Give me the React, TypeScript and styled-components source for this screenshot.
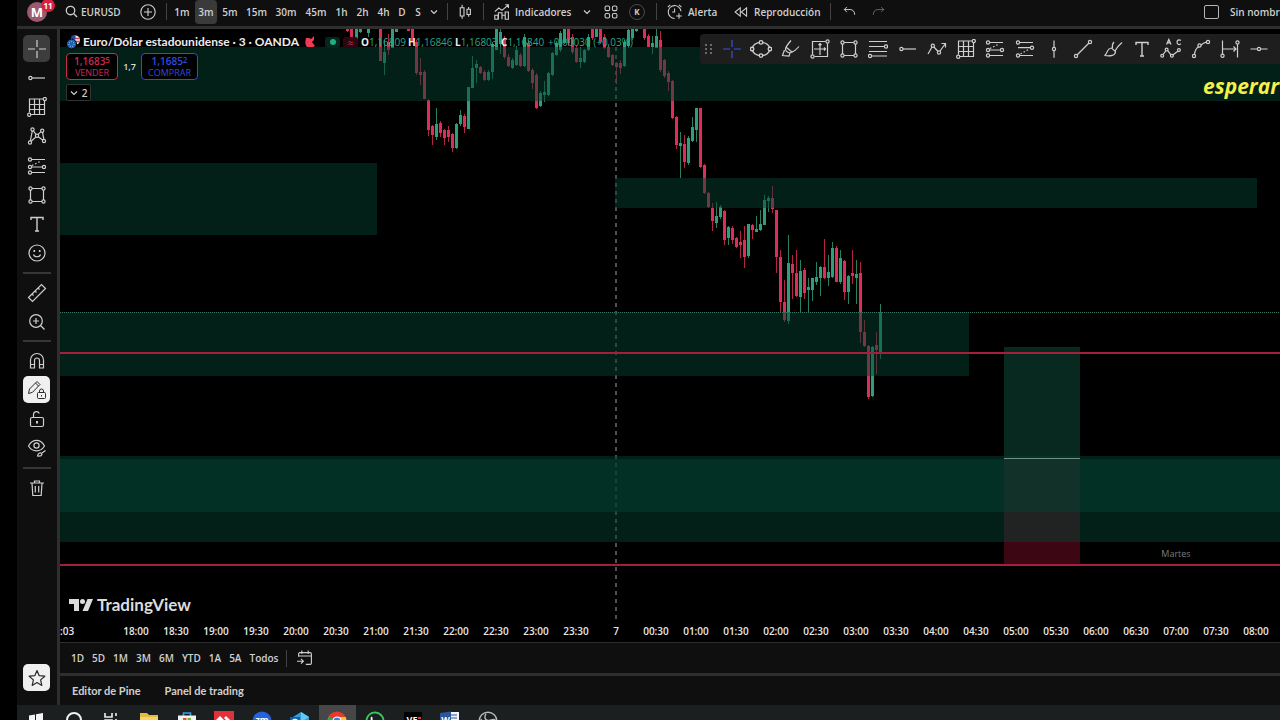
import React from "react";
import styled, { createGlobalStyle, css } from "styled-components";

const GlobalStyle = createGlobalStyle`
  * { box-sizing: border-box; }
  html, body { margin: 0; padding: 0; background: #000; }
  body { overflow: hidden; font-family: "Open Sans", "Noto Sans", sans-serif; color: #cfcfcf; }
  button, input { font: inherit; color: inherit; }
  svg { display: block; flex: none; }
`;

const LINE = "#2e2e2e";
const PANEL = "#0f0f0f";
const RED = "#dc2f58";
const GREEN = "#2f9e7c";

/* ---------- layout ---------- */

const Page = styled.div`
  display: flex;
  flex-direction: column;
  height: 100vh;
  padding-left: 17px;
  overflow: hidden;
`;

const Header = styled.header`
  display: flex;
  align-items: center;
  flex: none;
  height: 29px;
  padding: 0 0 3px 10px;
  background: ${PANEL};
  border-bottom: 3px solid ${LINE};
  font-size: 10px;
  font-weight: 600;
  white-space: nowrap;
`;

const Workspace = styled.div`
  display: flex;
  flex: 1;
  min-height: 0;
`;

const SideBar = styled.nav`
  display: flex;
  flex-direction: column;
  align-items: center;
  flex: none;
  width: 43px;
  padding: 6px 1px 14px 0;
  background: ${PANEL};
  border-right: 3px solid ${LINE};
`;

const Main = styled.main`
  display: flex;
  flex-direction: column;
  flex: 1;
  min-width: 0;
`;

const ChartArea = styled.section`
  position: relative;
  flex: 1;
  min-height: 0;
  overflow: hidden;
  background: #000;
`;

/* ---------- shared controls ---------- */

const PlainButton = styled.button`
  display: flex;
  align-items: center;
  justify-content: center;
  flex: none;
  padding: 0;
  border: 0;
  background: none;
  cursor: pointer;
`;

const Separator = styled.span<{ $before: number; $after: number }>`
  flex: none;
  width: 1px;
  height: 17px;
  margin: 0 ${(p) => p.$after}px 0 ${(p) => p.$before}px;
  background: #434343;
`;

/* ---------- header ---------- */

const Avatar = styled(PlainButton)`
  position: relative;
  width: 20px;
  height: 20px;
  border-radius: 50%;
  background: #9c5a70;
  color: #fff;
  font-size: 13px;
  font-weight: 700;
`;

const Badge = styled.span`
  position: absolute;
  top: -3px;
  left: 14px;
  width: 14px;
  height: 13px;
  border-radius: 7px;
  background: #d9213f;
  font-size: 8px;
  line-height: 13px;
  text-align: center;
`;

const HeaderButton = styled(PlainButton)<{ $gap?: number; $left?: number; $width?: number }>`
  gap: ${(p) => p.$gap ?? 0}px;
  margin-left: ${(p) => p.$left ?? 0}px;
  ${(p) => p.$width && css`width: ${p.$width}px; justify-content: flex-start;`}
`;

const Intervals = styled.div`
  display: flex;
  gap: 2px;
  flex: none;
`;

const Interval = styled(PlainButton)<{ $active?: boolean; $width: number }>`
  width: ${(p) => p.$width}px;
  height: 24px;
  border-radius: 4px;
  background: ${(p) => (p.$active ? "#3a3a3a" : "transparent")};
`;

const Round = styled(PlainButton)`
  width: 16px;
  height: 16px;
  margin-left: 11px;
  border: 1px solid #4a4a4a;
  border-radius: 50%;
  font-size: 8px;
  font-weight: 700;
`;

const LayoutName = styled.label`
  display: flex;
  align-items: center;
  gap: 11px;
  flex: none;
  width: 76px;
  margin-left: auto;
  overflow: hidden;
`;

const Tick = styled.input`
  appearance: none;
  flex: none;
  width: 15px;
  height: 14px;
  margin: 0;
  border: 1px solid #b5b5b5;
  border-radius: 2px;
`;

/* ---------- drawing side bar ---------- */

const ToolGroup = styled.div<{ $height?: number }>`
  display: flex;
  flex-direction: column;
  justify-content: space-between;
  flex: none;
  height: ${(p) => (p.$height ? `${p.$height}px` : "auto")};
`;

const Tool = styled(PlainButton)<{ $look?: "active" | "light" }>`
  width: 27px;
  height: 27px;
  border-radius: 5px;
  ${(p) => p.$look === "active" && css`background: #3d3d3d;`}
  ${(p) => p.$look === "light" && css`background: #f0f0f0; color: #2a2a2a;`}
`;

const ToolRule = styled.hr`
  flex: none;
  width: 28px;
  height: 2px;
  margin: 5px 0;
  border: 0;
  background: #363636;
`;

const Spacer = styled.div`
  flex: 1;
`;

/* ---------- chart overlays ---------- */

const Canvas = styled.svg`
  position: absolute;
  inset: 0;
  width: 100%;
  height: 100%;
`;

const Legend = styled.div`
  position: absolute;
  top: 5px;
  left: 6px;
  display: flex;
  flex-direction: column;
  align-items: flex-start;
`;

const LegendRow = styled.div`
  display: flex;
  align-items: center;
  height: 16px;
  white-space: nowrap;
`;

const Title = styled.h1`
  flex: none;
  width: 222px;
  margin: 0 0 0 2px;
  color: #ececec;
  font-family: Lato, sans-serif;
  font-size: 12px;
  font-weight: 700;
  line-height: 16px;
`;

const Pill = styled.span<{ $color: string; $back: string }>`
  display: flex;
  align-items: center;
  justify-content: center;
  width: 15px;
  height: 11px;
  margin-right: 3px;
  border-radius: 3px;
  background: ${(p) => p.$back};
  color: ${(p) => p.$color};
  font-size: 11px;
  line-height: 11px;
`;

const Dot = styled.i`
  width: 6px;
  height: 6px;
  border-radius: 50%;
  background: currentColor;
`;

const Quote = styled.span<{ $width?: number }>`
  flex: none;
  width: ${(p) => (p.$width ? `${p.$width}px` : "auto")};
  color: #24ab85;
  font-size: 10px;
  b { color: #ececec; }
`;

const Trade = styled.div`
  display: flex;
  align-items: center;
  margin-top: 3px;
  color: #dcdcdc;
  font-size: 9px;
  font-weight: 600;
`;

const TradeButton = styled(PlainButton)<{ $color: string; $width: number }>`
  flex-direction: column;
  width: ${(p) => p.$width}px;
  height: 27px;
  border: 1px solid ${(p) => p.$color};
  border-radius: 4px;
  background: #000;
  color: ${(p) => p.$color};
  font-size: 9px;
  font-weight: 400;
  line-height: 11px;
  strong { font-size: 10px; font-weight: 600; }
  sup { font-size: 8px; line-height: 0; vertical-align: 2px; }
`;

const Spread = styled.span`
  width: 23px;
  text-align: center;
`;

const Collapse = styled(PlainButton)`
  gap: 4px;
  width: 25px;
  height: 17px;
  margin-top: 4px;
  border: 1px solid #333;
  border-radius: 2px;
  background: #000;
  font-size: 10px;
  font-weight: 600;
`;

const Favorites = styled.div`
  position: absolute;
  top: 5px;
  left: 640px;
  right: 0;
  display: flex;
  align-items: center;
  height: 30px;
  padding-right: 6px;
  border-radius: 4px 0 0 4px;
  background: #1e1e1e;
`;

const Grip = styled.span`
  display: flex;
  justify-content: center;
  flex: none;
  width: 17px;
  color: #6a6a6a;
`;

const Favorite = styled(PlainButton)<{ $accent?: boolean }>`
  flex: 1;
  height: 30px;
  color: ${(p) => (p.$accent ? "#3c50d8" : "#cfcfcf")};
`;

const Brand = styled.a`
  position: absolute;
  left: 9px;
  bottom: 5px;
  display: flex;
  align-items: center;
  gap: 4px;
  color: #dcdcdc;
  font-family: Lato, sans-serif;
  font-size: 17px;
  font-weight: 700;
  line-height: 20px;
  text-decoration: none;
`;

/* ---------- bottom bars ---------- */

const TimeAxis = styled.div`
  display: flex;
  align-items: center;
  flex: none;
  height: 22px;
  overflow: hidden;
  background: #000;
  color: #e8e8e8;
  font-size: 10px;
  font-weight: 600;
`;

const FirstTime = styled.span`
  flex: none;
  width: 56px;
`;

const Time = styled.span`
  flex: none;
  width: 40px;
  text-align: center;
`;

const RangeBar = styled.div`
  display: flex;
  align-items: center;
  flex: none;
  gap: 8px;
  height: 34px;
  padding-left: 11px;
  background: ${PANEL};
  border-top: 1px solid ${LINE};
  border-bottom: 3px solid ${LINE};
  font-size: 10px;
  font-weight: 600;
`;

const PanelTabs = styled.div`
  display: flex;
  align-items: center;
  flex: none;
  gap: 24px;
  height: 29px;
  padding-left: 12px;
  background: ${PANEL};
  font-family: Lato, sans-serif;
  font-size: 11px;
  font-weight: 700;
`;

const TaskBar = styled.footer`
  flex: none;
  height: 15px;
  overflow: hidden;
  background: #1b1f1f;
`;

const TaskList = styled.div`
  display: grid;
  grid-template-columns: repeat(13, 1fr);
  width: 490px;
`;

const Task = styled(PlainButton)<{ $active?: boolean }>`
  align-items: flex-start;
  height: 32px;
  padding-top: 6px;
  background: ${(p) => (p.$active ? "#474747" : "transparent")};
`;

/* ---------- icons ---------- */

const Icon = ({ size = 20, children, w = 1.2 }: { size?: number; w?: number; children: React.ReactNode }) => (
  <svg width={size} height={size} viewBox="0 0 20 20" fill="none" stroke="currentColor" strokeWidth={w} aria-hidden="true">
    {children}
  </svg>
);

const Nodes = ({ at, r = 1.6 }: { at: number[][]; r?: number }) => (
  <>{at.map(([x, y]) => <circle key={`${x}-${y}`} cx={x} cy={y} r={r} />)}</>
);

const Cross = () => <Icon><path d="M10 1v7M10 12v7M1 10h7M12 10h7" /></Icon>;
const HRay = () => <Icon><Nodes at={[[3.4, 10]]} /><path d="M5 10h13" /></Icon>;
const GridTool = () => (
  <Icon><path d="M16 2H2.500v13.500M4 17.500h13.500V4M2.500 7.500h15M2.500 12.500h15M7.500 2v15.500M12.500 2v15.500" /><Nodes at={[[17.8, 2], [2.2, 17.8]]} /></Icon>
);
const Pattern = () => (
  <Icon>
    <path d="M5.300 5 3.300 15M6.500 5l2.600 3.700M11 8.700l3-3M15.500 6.200l1.300 7M4.200 15.200l4.800-4.300M11.300 10.800l4.600 3.400" />
    <Nodes at={[[5.5, 3.5], [10, 9.8], [15.2, 4.7], [3, 16.5], [17, 15]]} />
  </Icon>
);
const FibChannel = () => (
  <Icon>
    <path d="M4.600 3.500H18M4.600 11h10.800M4.600 16.500H18" />
    <path d="M5 9.500l9-4.500" strokeDasharray="1.500 2" />
    <Nodes at={[[3, 3.5], [3, 11], [3, 16.5], [17, 11]]} />
  </Icon>
);
const FibSteps = () => (
  <Icon>
    <path d="M4.600 3.500H18M3 8.700h12.400M4.600 16.500H18" />
    <path d="M5.500 15l9-5" strokeDasharray="1.500 2" />
    <Nodes at={[[3, 3.5], [17, 8.7], [3, 16.5]]} />
  </Icon>
);
const RectTool = () => (
  <Icon><path d="M5.100 3.500h9.800M5.100 16.500h9.800M3.500 5.100v9.800M16.500 5.100v9.800" /><Nodes at={[[3.5, 3.5], [16.5, 3.5], [3.5, 16.5], [16.5, 16.5]]} /></Icon>
);
const TextTool = () => <Icon w={1.4}><path d="M4 6V3.500h12V6M10 3.500v13.500M8 17h4" /></Icon>;
const Smile = () => (
  <Icon><circle cx="10" cy="10" r="8" /><path d="M6.500 11.500c1 3 6 3 7 0" /><path d="M7.300 7v2M12.700 7v2" strokeWidth="1.600" /></Icon>
);
const Ruler = () => (
  <Icon><path d="M1.500 14.500 14.500 1.500l4 4-13 13zM5 11l1.500 1.500M8 8l1.500 1.500M11 5l1.500 1.500" /></Icon>
);
const ZoomIn = () => <Icon><circle cx="9" cy="9" r="6.300" /><path d="M9 6v6M6 9h6M13.500 13.500l4 4" /></Icon>;
const Magnet = () => (
  <Icon><path d="M3.500 17V9a6.500 6.500 0 0 1 13 0v8h-4V9.500a2.500 2.500 0 0 0-5 0V17zM3.500 13.500h4M12.500 13.500h4" /></Icon>
);
const PencilLock = () => (
  <Icon w={1}>
    <path d="M1.500 13.500 2.500 9 10 1.500l3 3-7.500 7.800zM8.500 3l3 3" />
    <rect x="10.500" y="12.500" width="8" height="6" rx="1" /><path d="M12.500 12.500v-1.500a2 2 0 0 1 4 0v1.500M14.500 15v1.500" />
  </Icon>
);
const Unlock = () => (
  <Icon><rect x="3.500" y="8.500" width="13" height="9" rx="1.500" /><path d="M6.500 8.500V5.500a3 3 0 0 1 5.800-1" /><path d="M10 12v2.500" strokeWidth="2" /></Icon>
);
const EyeBrush = () => (
  <Icon><path d="M1.500 8c4-7.500 12-7.500 16 0-4 6.500-12 6.500-16 0z" /><circle cx="9.500" cy="7.500" r="2.600" /><path d="M10.500 18c.5-2.500 2-3.500 3.500-3l1 1.300c-.5 1.700-2.500 2-4.500 1.700zM15 15l3.500-2.500" /></Icon>
);
const Trash = () => (
  <Icon><path d="M3 5h14M5 5l.8 12.500h8.400L15 5M7.500 5V3h5v2M8.300 8v6.500M11.700 8v6.500" /></Icon>
);
const Star = () => <Icon><path d="M10 2.500l2.200 5.200 5.600.5-4.200 3.700 1.200 5.500-4.800-2.900-4.800 2.900 1.200-5.500L2.200 8.200l5.600-.5z" strokeLinejoin="round" /></Icon>;

const Ellipse = () => (
  <Icon size={22}><ellipse cx="10" cy="10" rx="8" ry="6" /><g fill="#1e1e1e"><Nodes at={[[10, 4], [10, 16], [1.9, 10], [18.1, 10]]} /></g></Icon>
);
const Marker = () => <Icon><path d="M11 1.500C8 5 5.500 8.500 5.500 10c0 2.500 3 4.500 5.500 3.500 3-1 6-3.500 8-6M6.500 8.500l6 5M4.500 11l-2 5.500 6.500.5 1-3" /></Icon>;
const LongGrid = () => (
  <Icon><path d="M15.500 2.500H2.500v13M4.500 17.500h13v-13M10 4v12M4 10h12M8.500 6 10 4.500 11.500 6M14 8.500l1.500 1.500-1.500 1.500" /><Nodes at={[[17.5, 2.5], [2.5, 17.5]]} /></Icon>
);
const FibLines = () => (
  <Icon><path d="M1 2.500h18M1 7.500h15.500M1 12.500h18M3.500 17H19" /><Nodes at={[[18, 7.5], [2, 17]]} /></Icon>
);
const Zigzag = () => <Icon><path d="M1 15l4-7M7 8l4 4.500M13 12l5.500-7.500M14.500 4.500h4v4" /><Nodes at={[[5.8, 6.8], [12, 13.5]]} /></Icon>;
const VLine = () => <Icon><path d="M10 1.500v7M10 11.700v7" /><Nodes at={[[10, 10]]} /></Icon>;
const TrendLine = () => <Icon><path d="M4 16 16 4" /><Nodes at={[[3, 17], [17, 3]]} /></Icon>;
const Brush = () => <Icon><path d="M1.500 16.500c3-1 2-7 7-7.500l4 3.500c0 4-5 5-11 4zM9.500 9c-.5-3 .5-5 1.500-6M12 12c2-4 4-6 7-8.500" /></Icon>;
const Elliott = () => (
  <Icon size={22} w={1.1}>
    <path d="M2.800 15 5.300 11.700M7 11.500l3 3.800M11.600 15.500l4.600-3.500" />
    <Nodes at={[[2, 16.2], [6, 10.5], [10.8, 16.2], [17.2, 11]]} r={1.3} />
    <path d="M6 6 8 1.300 10 6M6.800 4.500h2.400M19 2.300c-2-1.500-3.500 0-3.500 1.500s1.500 3 3.500 1.500" />
  </Icon>
);
const Curve = () => <Icon><path d="M3.500 15.500C4 11 6 8.500 8 7.500M9.800 6.300C12 4 14 3.500 15.400 3.200" /><Nodes at={[[3, 17], [8.5, 6.5], [17, 3]]} /></Icon>;
const Measure = () => <Icon><path d="M2.500 1.500v13.500M17.500 5v13.500M3 10h13M13.500 7.500 16 10l-2.500 2.500" /><Nodes at={[[2.5, 16.7], [17.5, 3.4]]} /></Icon>;
const HLine = () => <Icon><path d="M1.500 10h7M11.600 10h7" /><Nodes at={[[10, 10]]} /></Icon>;

const Chevron = ({ size = 8 }: { size?: number }) => (
  <svg width={size} height={size} viewBox="0 0 8 8" fill="none" stroke="currentColor" strokeWidth="1.200" aria-hidden="true"><path d="M1 2.500 4 5.500l3-3" /></svg>
);

/* ---------- chart data: x, high, body top, body bottom, low, rising ---------- */

const CANDLES: [number, number, number, number, number, 0 | 1][] = [
  [347, 28, 28, 31, 32, 0], [351, 28, 28, 44, 47, 0], [356, 28, 28, 44, 47, 1], [360, 28, 28, 32, 33, 1],
  [368, 28, 28, 33, 37, 1], [380, 28, 28, 61, 61, 0], [384, 40, 52, 63, 75, 1], [388, 34, 42, 50, 55, 0], [392, 28, 28, 48, 48, 1],
  [396, 28, 28, 32, 32, 1], [408, 28, 28, 31, 31, 0], [412, 28, 28, 42, 42, 0], [416, 40, 42, 73, 75, 0], [420, 58, 72, 75, 85, 0],
  [424, 70, 72, 99, 99, 0], [428, 99, 100, 130, 136, 0], [432, 125, 126, 135, 145, 0], [436, 108, 124, 137, 140, 1],
  [440, 121, 123, 133, 137, 0], [444, 129, 130, 138, 145, 0], [448, 126, 130, 137, 142, 0], [452, 133, 134, 148, 152, 0],
  [456, 123, 124, 148, 149, 1], [460, 110, 115, 124, 126, 1], [464, 114, 116, 127, 133, 0], [468, 87, 87, 129, 129, 1],
  [472, 56, 68, 88, 88, 1], [476, 60, 64, 68, 83, 1], [480, 66, 67, 73, 74, 0], [484, 70, 72, 80, 81, 0], [488, 70, 72, 80, 81, 1],
  [492, 42, 44, 72, 79, 1], [496, 28, 28, 50, 50, 1], [500, 28, 32, 44, 54, 1], [504, 36, 40, 57, 59, 0], [508, 54, 57, 66, 67, 0],
  [512, 58, 60, 68, 69, 1], [516, 46, 50, 65, 66, 1], [520, 53, 55, 66, 67, 0], [524, 34, 37, 66, 67, 1], [528, 40, 43, 71, 72, 0],
  [532, 68, 70, 83, 89, 0], [536, 73, 75, 108, 109, 0], [540, 91, 93, 106, 107, 1], [544, 81, 92, 95, 102, 1],
  [548, 72, 73, 95, 96, 1], [552, 52, 53, 75, 76, 1], [556, 41, 43, 55, 56, 1], [560, 31, 33, 50, 52, 1], [564, 28, 28, 43, 44, 1],
  [568, 28, 28, 43, 46, 0], [572, 34, 37, 52, 54, 0], [576, 46, 48, 62, 63, 0], [580, 47, 58, 62, 68, 1], [584, 49, 50, 62, 63, 1],
  [588, 34, 37, 50, 51, 1], [592, 28, 28, 38, 40, 0], [596, 28, 28, 37, 37, 1], [600, 28, 28, 42, 44, 0], [604, 34, 37, 48, 49, 0],
  [608, 46, 47, 57, 58, 0], [612, 54, 55, 65, 66, 0], [616, 62, 63, 67, 84, 0], [620, 60, 63, 68, 74, 0], [624, 40, 42, 66, 67, 1],
  [628, 28, 30, 46, 48, 1], [632, 28, 28, 38, 40, 1], [636, 28, 28, 31, 32, 1], [644, 28, 28, 38, 40, 0], [648, 34, 36, 47, 47, 0],
  [652, 36, 43, 47, 54, 1], [656, 28, 36, 48, 48, 1], [660, 31, 40, 70, 72, 0], [664, 59, 60, 76, 78, 0], [668, 71, 73, 82, 91, 0],
  [672, 80, 81, 118, 119, 0], [676, 116, 117, 145, 149, 0], [680, 132, 143, 146, 178, 1], [684, 135, 144, 162, 168, 0],
  [688, 136, 138, 163, 165, 1], [692, 117, 127, 141, 142, 1], [696, 108, 108, 130, 142, 1], [700, 108, 108, 167, 168, 0],
  [704, 164, 165, 193, 194, 0], [708, 192, 193, 207, 208, 0], [712, 203, 208, 221, 231, 0], [716, 202, 216, 223, 228, 1],
  [720, 205, 207, 217, 219, 1], [724, 210, 211, 240, 245, 0], [728, 226, 227, 238, 245, 1], [732, 226, 228, 240, 244, 0],
  [736, 237, 238, 247, 248, 0], [740, 231, 242, 245, 258, 0], [744, 226, 240, 257, 268, 0], [748, 224, 224, 256, 258, 1],
  [752, 224, 225, 230, 239, 0], [756, 216, 229, 232, 232, 1], [760, 210, 224, 230, 231, 1], [764, 195, 200, 225, 225, 1],
  [768, 196, 198, 201, 212, 1], [772, 186, 198, 209, 213, 0], [776, 210, 210, 257, 273, 0], [780, 250, 257, 302, 312, 0],
  [784, 280, 302, 320, 322, 0], [788, 235, 263, 321, 324, 1], [792, 255, 264, 273, 299, 0], [796, 250, 273, 296, 297, 0],
  [800, 260, 271, 297, 312, 1], [804, 268, 270, 293, 299, 0], [808, 278, 287, 290, 312, 1], [812, 278, 278, 290, 301, 1],
  [816, 262, 277, 282, 285, 1], [820, 266, 267, 278, 296, 1], [824, 239, 267, 278, 279, 0], [828, 255, 272, 278, 286, 1],
  [832, 242, 248, 277, 278, 1], [836, 246, 248, 282, 282, 0], [840, 250, 258, 282, 284, 1], [844, 260, 261, 292, 300, 0],
  [848, 275, 276, 292, 304, 1], [852, 250, 273, 276, 284, 0], [856, 260, 274, 278, 304, 1], [860, 262, 273, 332, 343, 0],
  [864, 320, 332, 346, 347, 0], [868, 345, 346, 397, 399, 0], [872, 346, 347, 396, 397, 1], [876, 332, 345, 350, 374, 0],
  [880, 304, 312, 352, 359, 1],
];

/* x, y, width, height; a missing width runs to the right edge */
const ZONES: [number, number, number | null, number][] = [
  [0, 18, null, 54],
  [0, 134, 317, 72],
  [555, 149, 642, 30],
  [0, 283, 909, 64],
  [0, 427, null, 86],
  [0, 430, null, 53],
];

const Plot = () => (
  <Canvas role="img" aria-label="EURUSD, velas de 3 minutos">
    <rect x="944" y="318" width="76" height="111" fill="#07291f" />
    <rect x="944" y="429" width="76" height="106" fill="#3c0713" />
    <path d="M556 18V592" stroke="#a2a2a2" strokeDasharray="4 4" />
    <g transform="translate(-60 -29)">
      {CANDLES.map(([x, hi, top, bottom, low, up]) => (
        <g key={x} fill={up ? GREEN : RED}>
          <rect x={x} y={hi} width="1" height={low - hi} opacity="0.8" />
          <rect x={x - 1} y={top} width="3" height={bottom - top} />
        </g>
      ))}
    </g>
    {ZONES.map(([x, y, w, h]) => (
      <rect key={y} x={x} y={y} width={w ?? "100%"} height={h} fill="#034030" opacity="0.5" />
    ))}
    <rect x="944" y="429" width="76" height="1" fill="#6d8f84" />
    <line x1="0" y1="283.500" x2="100%" y2="283.500" stroke="#3b7565" strokeDasharray="1 1" />
    <rect x="0" y="323" width="100%" height="2" fill="#a31f3b" />
    <rect x="0" y="535" width="100%" height="2" fill="#a31f3b" />
    <text x="1116" y="528" textAnchor="middle" fill="#7d7d7d" fontSize="9">Martes</text>
    <text x="1143" y="65" fill="#f5f04a" fontSize="21" fontWeight="700" fontStyle="italic">esperar</text>
  </Canvas>
);

/* label, button width */
const INTERVALS: [string, number][] = [
  ["1m", 22], ["3m", 22], ["5m", 22], ["15m", 27], ["30m", 28], ["45m", 28], ["1h", 19], ["2h", 19], ["4h", 19], ["D", 14], ["S", 14],
];
const TIMES = Array.from({ length: 29 }, (_, i) => {
  const minutes = (18 * 60 + i * 30) % 1440;
  if (minutes === 0) return "7";
  return `${String(Math.floor(minutes / 60)).padStart(2, "0")}:${minutes % 60 ? "30" : "00"}`;
});
const RANGES = ["1D", "5D", "1M", "3M", "6M", "YTD", "1A", "5A", "Todos"];

const SIDE_TOOLS: [string, React.FC][] = [
  ["Cruz", Cross], ["Rayo horizontal", HRay], ["Cuadrícula", GridTool], ["Patrones", Pattern],
  ["Canal", FibChannel], ["Rectángulo", RectTool], ["Texto", TextTool], ["Emojis", Smile],
];
const FAVORITES: [string, React.FC][] = [
  ["Cruz", Cross], ["Elipse", Ellipse], ["Resaltador", Marker], ["Caja de Gann", LongGrid], ["Rectángulo", RectTool],
  ["Retroceso de Fibonacci", FibLines], ["Rayo horizontal", HRay], ["Ruta", Zigzag], ["Cuadrícula", GridTool],
  ["Posición larga", FibChannel], ["Posición corta", FibSteps], ["Línea vertical", VLine], ["Línea de tendencia", TrendLine],
  ["Pincel", Brush], ["Texto", TextTool], ["Onda de Elliott", Elliott], ["Curva", Curve], ["Rango de fechas", Measure], ["Línea horizontal", HLine],
];

const TASKS: [string, React.ReactNode][] = [
  ["Inicio", <g fill="#f4f4f4"><path d="M3 4.500 9 3.500v6H3zM10 3.300 17 2v7.500h-7zM3 10.500h6v6l-6-1zM10 10.500h7V18l-7-1.200z" /></g>],
  ["Buscar", <circle cx="10" cy="9" r="7" fill="none" stroke="#f0f0f0" strokeWidth="2" />],
  ["Vista de tareas", <path d="M4 2v4h7V2M4 9h7v8H4zM15 2v3M15 8v9" fill="none" stroke="#eee" strokeWidth="1.600" />],
  ["Explorador", <g><path d="M1 2h7l2 2h9v14H1z" fill="#e5b93f" /><path d="M1 6h18v12H1z" fill="#f6d566" /></g>],
  ["Tienda", <g><path d="M6.500 5V2h7v3" fill="none" stroke="#3aa0df" strokeWidth="1.600" /><path d="M1 4.500h18V18H1z" fill="#f2f2f2" /><path d="M6 7h3.500v3H6z" fill="#e8502e" /><path d="M10.500 7H14v3h-3.500z" fill="#74b530" /></g>],
  ["AnyDesk", <g><path d="M0 0h20v20H0z" fill="#e33139" /><path d="M6 5l5 5-5 5-5-5zM12 5l5 5-5 5-2-2 3-3-3-3z" fill="#fff" /></g>],
  ["Zoom", <g><circle cx="10" cy="10" r="9.500" fill="#2463dc" /><text x="10" y="12" textAnchor="middle" fontSize="9" fontWeight="700" fill="#fff">zm</text></g>],
  ["Outlook", <g><path d="M3 6l8-5 8 5v12H3z" fill="#2f9fe0" /><path d="M11 1l8 5-8 5z" fill="#63c8f4" /><path d="M0 6h10v10H0z" fill="#0f62b5" /><circle cx="5" cy="11" r="2.600" fill="none" stroke="#fff" strokeWidth="1.400" /></g>],
  ["Chrome", <g><circle cx="10" cy="10" r="9.500" fill="#e33b2e" /><path d="M10 10 1.800 5.200A9.500 9.500 0 0 0 10 19.500z" fill="#2da44e" /><path d="M10 6h8.600A9.500 9.500 0 0 1 10 19.500z" fill="#f7c52c" /><circle cx="10" cy="10" r="4.600" fill="#fff" /><circle cx="10" cy="10" r="3.500" fill="#3a7de8" /></g>],
  ["WhatsApp", <g fill="none" stroke="#37c95f" strokeWidth="1.800"><path d="M1 19l1.500-5A8.500 8.500 0 1 1 6 17.500z" /><path d="M7 6c-2 3 4 9 7 7" stroke="#f0f0f0" /></g>],
  ["Lector", <g><path d="M1 1h18v18H1z" fill="#000" /><text x="9" y="12" textAnchor="middle" fontSize="9" fontWeight="700" fill="#fff">VE</text><path d="M15 6h3v2h-3z" fill="#d8334a" /></g>],
  ["Word", <g><path d="M8 1h11v18H8z" fill="#f2f4f8" /><path d="M11 4h6M11 7h6" stroke="#2b579a" /><path d="M0 2l11-1.500v19L0 18z" fill="#2b579a" /><text x="5.500" y="12" textAnchor="middle" fontSize="9" fontWeight="700" fill="#fff">W</text></g>],
  ["OBS", <g fill="none" stroke="#b9b9b9" strokeWidth="1.400"><circle cx="10" cy="10" r="8.800" /><path d="M8 3c-2 3-1 6 2 6.500M10 9.500c3 0 5-2 7.500-.5M10 9.500C8 12 4 11 3 8" /></g>],
];

export default function App() {
  return (
    <Page>
      <GlobalStyle />
      <Header>
        <Avatar aria-label="Perfil">M<Badge>11</Badge></Avatar>
        <HeaderButton $left={18} $gap={3} $width={75}>
          <Icon size={13} w={2}><circle cx="8.500" cy="8.500" r="6.500" /><path d="m13.500 13.500 5 5" /></Icon>EURUSD
        </HeaderButton>
        <HeaderButton aria-label="Comparar">
          <Icon size={16} w={1.4}><circle cx="10" cy="10" r="9" /><path d="M10 5v10M5 10h10" /></Icon>
        </HeaderButton>
        <Separator $before={10} $after={4} />
        <Intervals>
          {INTERVALS.map(([name, width]) => <Interval key={name} $width={width} $active={name === "3m"}>{name}</Interval>)}
        </Intervals>
        <HeaderButton $left={5} aria-label="Más intervalos"><Chevron /></HeaderButton>
        <Separator $before={9} $after={10} />
        <HeaderButton aria-label="Velas">
          <Icon size={15} w={1.5}><path d="M3 5h5v11H3zM5.500 1v4M5.500 16v3.500M12 7h4.500v7H12zM14.200 4v3M14.200 14v3" /></Icon>
        </HeaderButton>
        <Separator $before={10} $after={10} />
        <HeaderButton $gap={5} $width={89}>
          <Icon size={16} w={1.4}><path d="M1 19v-5h4v5zM5.500 19v-8h4.500v8M10 14h4v5M14 19v-9h4v9zM1 9.500 6 5l4 3 8-7M14 1h4v4" /></Icon>Indicadores
        </HeaderButton>
        <HeaderButton aria-label="Favoritos"><Chevron /></HeaderButton>
        <HeaderButton $left={13} aria-label="Plantillas">
          <Icon size={14} w={1.5}><rect x="1.500" y="1.500" width="6.500" height="6.500" rx="2" /><rect x="12" y="1.500" width="6.500" height="6.500" rx="2" /><rect x="1.500" y="12" width="6.500" height="6.500" rx="2" /><rect x="12" y="12" width="6.500" height="6.500" rx="2" /></Icon>
        </HeaderButton>
        <Round>K</Round>
        <Separator $before={11} $after={10} />
        <HeaderButton $gap={5} $width={67}>
          <Icon size={16} w={1.3}><path d="M17.500 9A8 8 0 1 0 9.500 18M9.500 5.500V10H6.500M1 4l3-3M15 1l3 3M15 11.500v7M11.500 15h7" /></Icon>Alerta
        </HeaderButton>
        <HeaderButton $gap={6} $width={96}>
          <Icon size={14} w={1.5}><path d="M9 4v12L1.500 10zM18 4v12l-7.500-6z" /></Icon>Reproducción
        </HeaderButton>
        <Separator $before={0} $after={12} />
        <HeaderButton aria-label="Deshacer"><Icon size={13} w={1.5}><path d="M6 3 2 7l4 4M2 7h9c4 0 7 3 7 8" /></Icon></HeaderButton>
        <HeaderButton $left={16} aria-label="Rehacer" disabled><Icon size={13} w={1.5}><path d="m14 3 4 4-4 4M18 7H9c-4 0-7 3-7 8" opacity="0.450" /></Icon></HeaderButton>
        <LayoutName><Tick type="checkbox" />Sin nombre</LayoutName>
      </Header>

      <Workspace>
        <SideBar aria-label="Herramientas de dibujo">
          <ToolGroup $height={232}>
            {SIDE_TOOLS.map(([name, Glyph], i) => (
              <Tool key={name} aria-label={name} $look={i === 0 ? "active" : undefined}><Glyph /></Tool>
            ))}
          </ToolGroup>
          <ToolRule />
          <ToolGroup $height={56}>
            <Tool aria-label="Medir"><Ruler /></Tool>
            <Tool aria-label="Acercar"><ZoomIn /></Tool>
          </ToolGroup>
          <ToolRule />
          <ToolGroup $height={115}>
            <Tool aria-label="Imán"><Magnet /></Tool>
            <Tool aria-label="Mantener dibujo" $look="light"><PencilLock /></Tool>
            <Tool aria-label="Bloquear"><Unlock /></Tool>
            <Tool aria-label="Ocultar"><EyeBrush /></Tool>
          </ToolGroup>
          <ToolRule />
          <Tool aria-label="Eliminar"><Trash /></Tool>
          <Spacer />
          <Tool aria-label="Favoritos" $look="light"><Star /></Tool>
        </SideBar>

        <Main>
          <ChartArea>
            <Plot />
            <Legend>
              <LegendRow>
                <svg width="15" height="15" viewBox="0 0 15 15" aria-hidden="true">
                  <circle cx="9.500" cy="5" r="4.500" fill="#e8e8ee" /><path d="M9 3.500h5M9 6.500h5" stroke="#d44a5a" strokeWidth="1.400" />
                  <path d="M5.500.500h4v4h-4z" fill="#27499b" /><circle cx="5.500" cy="9" r="5" fill="#1f62b8" stroke="#000" />
                  <circle cx="5.500" cy="9" r="2.500" fill="none" stroke="#a9c8ee" strokeDasharray="1 1.200" />
                </svg>
                <Title>Euro/Dólar estadounidense · 3 · OANDA</Title>
                <svg width="20" height="15" viewBox="0 0 20 15" aria-hidden="true"><path d="M1 3h3l2 1 3-3v4l-2 2 3 4-2 1H2c-2-2-2-6-1-9z" fill="#f03a55" /></svg>
                <Pill $color="#1fae83" $back="#06251c"><Dot /></Pill>
                <Pill $color="#c92a50" $back="#2a0711">≈</Pill>
                <Quote $width={47}><b>O</b>1,16809</Quote>
                <Quote $width={47}><b>H</b>1,16846</Quote>
                <Quote $width={46}><b>L</b>1,16803</Quote>
                <Quote $width={47}><b>C</b>1,16840</Quote>
                <Quote>+0,00030 (+0,03%)</Quote>
              </LegendRow>
              <Trade>
                <TradeButton $color="#d0284c" $width={52}><strong>1,1683<sup>5</sup></strong>VENDER</TradeButton>
                <Spread>1,7</Spread>
                <TradeButton $color="#2f4be0" $width={57}><strong>1,1685<sup>2</sup></strong>COMPRAR</TradeButton>
              </Trade>
              <Collapse><Chevron />2</Collapse>
            </Legend>
            <Favorites>
              <Grip>
                <svg width="8" height="12" viewBox="0 0 8 12" fill="currentColor" aria-hidden="true">
                  <path d="M0 1h2v2H0zM5 1h2v2H5zM0 5h2v2H0zM5 5h2v2H5zM0 9h2v2H0zM5 9h2v2H5z" />
                </svg>
              </Grip>
              {FAVORITES.map(([name, Glyph], i) => (
                <Favorite key={name} aria-label={name} $accent={i === 0}><Glyph /></Favorite>
              ))}
            </Favorites>
            <Brand href="#tradingview">
              <svg width="24" height="12" viewBox="0 0 24 12" fill="currentColor" aria-hidden="true">
                <path d="M0 0h10v12H5V5H0z" /><circle cx="13.500" cy="2.500" r="2.500" /><path d="M18.500 0H24l-5 12h-5.500z" />
              </svg>
              TradingView
            </Brand>
          </ChartArea>

          <TimeAxis>
            <FirstTime>:03</FirstTime>
            {TIMES.map((t) => <Time key={t}>{t}</Time>)}
          </TimeAxis>
          <RangeBar>
            {RANGES.map((r) => <PlainButton key={r}>{r}</PlainButton>)}
            <Separator $before={0} $after={2} />
            <PlainButton aria-label="Ir a la fecha">
              <Icon size={16} w={1.4}><path d="M2 8.500V5c0-1 .6-1.700 1.700-1.700h12.600c1 0 1.700.6 1.700 1.700v11.300c0 1-.7 1.700-1.700 1.700H11M2 7.500h16M6 .500V5M14 .500V5M0 14h8M5 11l3 3-3 3" /></Icon>
            </PlainButton>
          </RangeBar>
          <PanelTabs>
            <PlainButton>Editor de Pine</PlainButton>
            <PlainButton>Panel de trading</PlainButton>
          </PanelTabs>
        </Main>
      </Workspace>

      <TaskBar>
        <TaskList>
          {TASKS.map(([name, art]) => (
            <Task key={name} aria-label={name} $active={name === "Chrome"}>
              <svg width="20" height="20" viewBox="0 0 20 20" aria-hidden="true">{art}</svg>
            </Task>
          ))}
        </TaskList>
      </TaskBar>
    </Page>
  );
}
